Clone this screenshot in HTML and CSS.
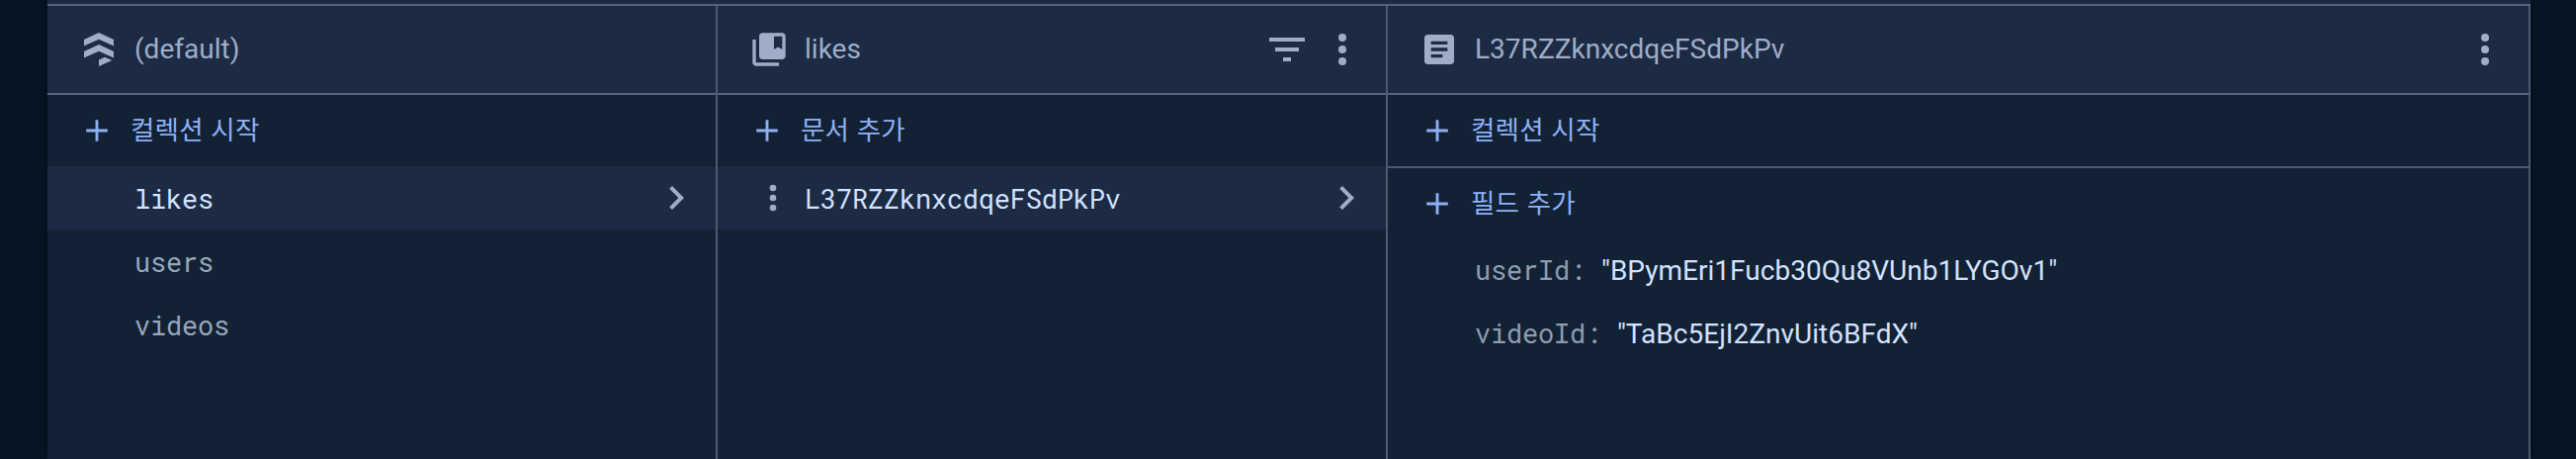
FILE: index.html
```html
<!DOCTYPE html>
<html lang="ko">
<head>
<meta charset="utf-8">
<title>Firestore</title>
<link rel="stylesheet" href="styles.css">
</head>
<body>
<svg class="defs" width="0" height="0">
  <symbol id="more" viewBox="0 0 24 24"><circle cx="12" cy="6" r="2"/><circle cx="12" cy="12" r="2"/><circle cx="12" cy="18" r="2"/></symbol>
  <symbol id="chevron" viewBox="0 0 24 24"><path d="M10 6L8.59 7.41 13.17 12l-4.58 4.59L10 18l6-6z"/></symbol>
  <symbol id="add" viewBox="0 0 24 24"><path d="M19.2 12.95h-6.25v6.25h-1.9v-6.25H4.8v-1.9h6.25V4.8h1.9v6.25h6.25z"/></symbol>
</svg>
<main class="panel">
  <div class="strip"></div>
  <div class="columns">
  <section class="column">
    <header class="head">
      <svg class="icon" viewBox="0 0 40 40"><path d="M20 3l15 7v6.6l-15-6.8-15 6.8V10zM20 15l15 7v6.6l-15-6.8-15 6.8V22zM20 30.6l6-2.9 7.3 3.3L20 37z"/></svg>
      <span class="title">(default)</span>
    </header>
    <div class="add"><svg><use href="#add"/></svg><span>컬렉션 시작</span></div>
    <div class="row selected"><span class="mono">likes</span><svg class="chevron"><use href="#chevron"/></svg></div>
    <div class="row"><span class="mono">users</span></div>
    <div class="row"><span class="mono">videos</span></div>
  </section>
  <section class="column">
    <header class="head">
      <svg class="icon" viewBox="0 0 24 24"><path fill-rule="evenodd" d="M4 6H2v14c0 1.1.9 2 2 2h14v-2H4V6zm16-4H8c-1.1 0-2 .9-2 2v12c0 1.1.9 2 2 2h12c1.1 0 2-.9 2-2V4c0-1.1-.9-2-2-2zm0 10l-2.5-1.5L15 12V4h5v8z"/></svg>
      <span class="title">likes</span>
      <svg class="action" viewBox="0 0 24 24"><path d="M10 18h4v-2h-4v2zM3 6v2h18V6H3zm3 7h12v-2H6v2z"/></svg>
      <svg class="action"><use href="#more"/></svg>
    </header>
    <div class="add"><svg><use href="#add"/></svg><span>문서 추가</span></div>
    <div class="row selected with-menu"><svg class="icon"><use href="#more"/></svg><span class="mono">L37RZZknxcdqeFSdPkPv</span><svg class="chevron"><use href="#chevron"/></svg></div>
  </section>
  <section class="column wide">
    <header class="head">
      <svg class="icon" viewBox="0 0 24 24"><path fill-rule="evenodd" d="M19 3H5c-1.1 0-2 .9-2 2v14c0 1.1.9 2 2 2h14c1.1 0 2-.9 2-2V5c0-1.1-.9-2-2-2zM14 17H7v-2h7zM17 13H7v-2h10zM17 9H7V7h10z"/></svg>
      <span class="title">L37RZZknxcdqeFSdPkPv</span>
      <svg class="action"><use href="#more"/></svg>
    </header>
    <div class="add divided"><svg><use href="#add"/></svg><span>컬렉션 시작</span></div>
    <div class="add"><svg><use href="#add"/></svg><span>필드 추가</span></div>
    <div class="field"><span class="mono">userId:</span><span class="value">"BPymEri1Fucb30Qu8VUnb1LYGOv1"</span></div>
    <div class="field"><span class="mono">videoId:</span><span class="value">"TaBc5EjI2ZnvUit6BFdX"</span></div>
  </section>
  </div>
</main>
</body>
</html>
```
FILE: styles.css
```css
* { box-sizing: border-box; }
body {
  margin: 0;
  background: #061423;
  font-family: Roboto, "Noto Sans CJK KR", sans-serif;
  font-size: 28px;
  color: #9fadc8;
}
.defs { display: block; }
.panel {
  display: flex;
  flex-direction: column;
  height: 464px;
  margin: 0 46px 0 48px;
  background: #122133;
  box-shadow: 0 0 6px rgba(0, 0, 0, .35);
}
.strip { height: 4px; background: #1c2b43; }
.columns { display: flex; flex: 1; border-top: 2px solid #53627d; }
.column { width: 678px; border-right: 2px solid #4d5a70; }
.wide { flex: 1; }
svg { fill: currentColor; flex: none; }
.head {
  display: flex;
  align-items: center;
  height: 90px;
  padding: 0 20px 0 32px;
  gap: 8px;
  background: #1c2b43;
  border-bottom: 2px solid #53627d;
}
.icon { width: 40px; height: 40px; }
.title { flex: 1; margin-left: 8px; padding-bottom: 1px; white-space: nowrap; letter-spacing: .02px; }
.action, .chevron { width: 48px; height: 48px; }
.add {
  display: flex;
  align-items: center;
  gap: 16px;
  height: 72px;
  padding-left: 32px;
  color: #8fb0f6;
  font-family: "Noto Sans CJK KR", sans-serif;
  font-size: 26.5px;
  line-height: 36px;
  letter-spacing: .2px;
}
.add span { padding-bottom: 5px; }
.add svg { width: 36px; height: 36px; }
.divided { height: 74px; border-bottom: 2px solid #4d5a70; }
.row {
  display: flex;
  align-items: center;
  height: 64px;
  padding: 0 16px 0 88px;
  color: #98a7be;
}
.selected { background: #1c2b43; color: #d3e2ff; }
.selected svg { color: #9fadc8; }
.with-menu { padding-left: 36px; gap: 12px; }
.chevron { margin-left: auto; }
.mono {
  font-family: "Roboto Mono", "Liberation Mono", monospace;
  font-size: 27px;
  letter-spacing: -.22px;
  white-space: nowrap;
}
.field {
  display: flex;
  align-items: center;
  height: 64px;
  padding: 0 0 2px 88px;
  gap: 16px;
  color: #8f9daf;
}
.field .mono { padding-bottom: 2px; }
.value { color: #d3e2ff; white-space: nowrap; letter-spacing: .02px; }
```
